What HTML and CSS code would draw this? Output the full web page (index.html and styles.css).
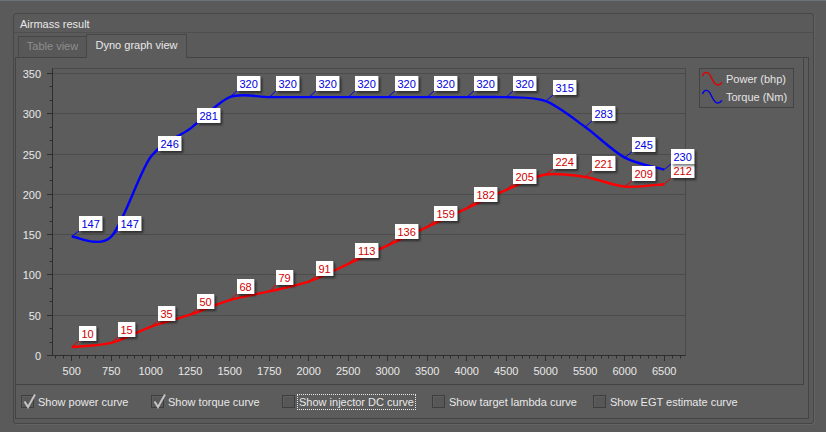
FILE: index.html
```html
<!DOCTYPE html>
<html>
<head>
<meta charset="utf-8">
<title>Airmass result</title>
<link rel="stylesheet" href="styles.css">
</head>
<body>
<div class="window">
  <div class="group">
    <div class="group-title">Airmass result</div>
    <div class="tabs">
      <div class="tab">Table view</div>
      <div class="tab active">Dyno graph view</div>
    </div>
    <div class="pane">
      <div class="chart">
        <svg id="chart" class="chart-svg" width="787" height="326" viewBox="16 58 787 326" xmlns="http://www.w3.org/2000/svg">
          <defs>
            <filter id="sh" x="-20%" y="-20%" width="160%" height="160%">
              <feDropShadow dx="2" dy="2" stdDeviation="0.8" flood-color="#000" flood-opacity="0.5"/>
            </filter>
          </defs>
          <g id="legend">
            <rect x="699.5" y="68.5" width="94" height="39" fill="none" stroke="#434343"/>
            <path d="M702.5,76 C704,71.5 708,70.5 711,77 S717,88 722,82.5" fill="none" stroke="#e00000" stroke-width="1.4"/>
            <text class="legend-text" x="726" y="83">Power (bhp)</text>
            <path d="M702.5,94 C704,89.5 708,88.5 711,95 S717,106 722,100.5" fill="none" stroke="#0000e8" stroke-width="1.4"/>
            <text class="legend-text" x="726" y="101">Torque (Nm)</text>
          </g>
        </svg>
      </div>
      <div class="options">
        <div class="opt"><span class="cb"><svg class="tick" width="16" height="17" viewBox="0 0 16 17"><path d="M2.5,8.5 L6,14 L13,1.5" fill="none" stroke="#c4c4c4" stroke-width="2"/></svg></span><span class="opt-label">Show power curve</span></div>
        <div class="opt"><span class="cb"><svg class="tick" width="16" height="17" viewBox="0 0 16 17"><path d="M2.5,8.5 L6,14 L13,1.5" fill="none" stroke="#c4c4c4" stroke-width="2"/></svg></span><span class="opt-label">Show torque curve</span></div>
        <div class="opt"><span class="cb"></span><span class="opt-label focus">Show injector DC curve</span></div>
        <div class="opt"><span class="cb"></span><span class="opt-label">Show target lambda curve</span></div>
        <div class="opt"><span class="cb"></span><span class="opt-label">Show EGT estimate curve</span></div>
      </div>
    </div>
  </div>
</div>
<script src="chart.js"></script>
</body>
</html>
```
FILE: styles.css
```css
html, body {
  margin: 0;
  padding: 0;
}
body {
  width: 826px;
  height: 432px;
  overflow: hidden;
  box-sizing: border-box;
  background: #5a5a5a;
  border-top: 1px solid #6b727c;
  font-family: "Liberation Sans", Arial, sans-serif;
  font-size: 11px;
  color: #e8e8e8;
}
.window {
  padding: 12px 0 0 13px;
}
.group {
  width: 801px;
  height: 411px;
  box-sizing: border-box;
  border: 1px solid #474747;
  border-radius: 3px;
  box-shadow: 1px 1px 0 #636363;
  display: flex;
  flex-direction: column;
}
.group-title {
  height: 19px;
  box-sizing: border-box;
  padding: 2px 0 0 6px;
  line-height: 16px;
  border-bottom: 1px solid #4f4f4f;
}
.tabs {
  height: 24px;
  display: flex;
  align-items: flex-end;
  padding-left: 4px;
}
.tab {
  box-sizing: border-box;
  width: 68px;
  height: 21px;
  line-height: 19px;
  text-align: center;
  color: #8e8e8e;
  background: #585858;
  border: 1px solid #474747;
  border-right: none;
  border-bottom: none;
}
.tab.active {
  width: 101px;
  height: 24px;
  line-height: 21px;
  color: #e8e8e8;
  background: #5c5c5c;
  border-right: 1px solid #474747;
  margin-bottom: -1px;
  position: relative;
  z-index: 1;
}
.pane {
  flex: 1;
  margin: 0 4px 4px 1px;
  box-sizing: border-box;
  border: 1px solid #444444;
  background: #5c5c5c;
  display: flex;
  flex-direction: column;
}
.chart {
  width: 788px;
  height: 327px;
  box-sizing: border-box;
  border-right: 1px solid #434343;
  border-bottom: 1px solid #434343;
}
.chart-svg {
  display: block;
  font-family: "Liberation Sans", Arial, sans-serif;
  font-size: 11px;
}
.legend-text {
  fill: #e4e4e4;
}
.axis-text {
  fill: #e8e8e8;
}
.options {
  flex: 1;
  display: grid;
  grid-template-columns: 130px 131px 150px 161px auto;
  align-items: center;
  padding-left: 5px;
}
.opt {
  display: flex;
  align-items: center;
}
.cb {
  position: relative;
  width: 13px;
  height: 13px;
  box-sizing: border-box;
  border: 1px solid #3e3e3e;
  background: #575757;
  box-shadow: inset 1px 1px 0 #5f5f5f;
  margin-right: 4px;
  flex: none;
}
.tick {
  position: absolute;
  left: 0;
  top: -3px;
}
.opt-label {
  line-height: 14px;
}
.opt-label.focus {
  margin-left: -2px;
  padding: 0 1px;
  border: 1px dotted #e8e8e8;
}
```
FILE: chart.js
```js
(function () {
  var NS = 'http://www.w3.org/2000/svg';
  var svg = document.getElementById('chart');
  var legend = document.getElementById('legend');
  function el(tag, attrs, parent) {
    var e = document.createElementNS(NS, tag);
    for (var k in attrs) e.setAttribute(k, attrs[k]);
    (parent || svg).insertBefore(e, parent ? null : legend);
    return e;
  }
  var cats = ['500','750','1000','1250','1500','1750','2000','2500','3000','3500','4000','4500','5000','5500','6000','6500'];
  var power = [10,15,35,50,68,79,91,113,136,159,182,205,224,221,209,212];
  var torque = [147,147,246,281,320,320,320,320,320,320,320,320,315,283,245,230];
  var L = 52.5, R = 685.5, T = 68.5, B = 355.5;
  var TENSION = 0.45;
  function X(i) { return 71.75 + 39.5 * i; }
  function Y(v) { return 355.5 - v * 282 / 350; }
  function Yd(v) { return 355 - v * 282 / 350; }

  // plot frame
  el('line', {x1: L, y1: T, x2: R, y2: T, stroke: '#4a4a4a'});
  el('line', {x1: R, y1: T, x2: R, y2: B, stroke: '#4a4a4a'});
  // grid
  for (var v = 50; v <= 350; v += 50) {
    var gy = Math.floor(Y(v)) + 0.5;
    el('line', {x1: L, y1: gy, x2: R, y2: gy, stroke: '#4c4c4c'});
  }
  // y ticks and labels
  for (var k = 0; k <= 21; k++) {
    var tv = k * 50 / 3;
    var ty = Math.floor(Y(tv)) + 0.5;
    if (k % 3 === 0) {
      el('line', {x1: 47, y1: ty, x2: L, y2: ty, stroke: '#2e2e2e'});
      var t = el('text', {x: 41, y: ty + 4, 'text-anchor': 'end', 'class': 'axis-text'});
      t.textContent = String(Math.round(tv));
    } else {
      el('line', {x1: 49.5, y1: ty, x2: L, y2: ty, stroke: '#2e2e2e'});
    }
  }
  // x ticks
  for (var j = 0; ; j++) {
    var tx = 52 + 3.95 + 7.9 * j;
    if (tx > 685) break;
    var px = Math.floor(tx) + 0.5;
    var major = (j % 5 === 2);
    el('line', {x1: px, y1: B, x2: px, y2: major ? 361 : 358.5, stroke: '#2e2e2e'});
  }
  for (var i = 0; i < cats.length; i++) {
    var xt = el('text', {x: X(i), y: 375, 'text-anchor': 'middle', 'class': 'axis-text'});
    xt.textContent = cats[i];
  }
  // axes
  el('line', {x1: L, y1: T, x2: L, y2: B + 0.5, stroke: '#2e2e2e'});
  el('line', {x1: L, y1: B, x2: R, y2: B, stroke: '#2e2e2e'});

  function spline(pts) {
    var f = TENSION / 3;
    var d = 'M' + pts[0][0].toFixed(2) + ',' + pts[0][1].toFixed(2);
    for (var i = 0; i < pts.length - 1; i++) {
      var p0 = pts[i - 1] || pts[i], p1 = pts[i], p2 = pts[i + 1], p3 = pts[i + 2] || pts[i + 1];
      var c1x = p1[0] + (p2[0] - p0[0]) * f, c1y = p1[1] + (p2[1] - p0[1]) * f;
      var c2x = p2[0] - (p3[0] - p1[0]) * f, c2y = p2[1] - (p3[1] - p1[1]) * f;
      d += ' C' + c1x.toFixed(2) + ',' + c1y.toFixed(2) + ' ' + c2x.toFixed(2) + ',' + c2y.toFixed(2) + ' ' + p2[0].toFixed(2) + ',' + p2[1].toFixed(2);
    }
    return d;
  }
  function series(data, lineColor) {
    var pts = data.map(function (v, i) { return [X(i), Yd(v)]; });
    el('path', {d: spline(pts), fill: 'none', stroke: lineColor, 'stroke-width': 2.4, 'stroke-linejoin': 'round'});
    return pts;
  }
  function labels(data, pts, lineColor, textColor) {
    data.forEach(function (v, i) {
      var p = pts[i];
      var s = String(v);
      var w = s.length * 6.1 + 5;
      var bx = Math.round(p[0]) + 7, by = Math.round(p[1]) - 21;
      el('line', {x1: p[0], y1: p[1], x2: bx + 1, y2: by + 14, stroke: lineColor, 'stroke-width': 1});
      el('rect', {x: bx, y: by, width: w, height: 15, fill: '#ffffff', filter: 'url(#sh)'});
      var t = el('text', {x: bx + w / 2, y: by + 12, 'text-anchor': 'middle', fill: textColor});
      t.textContent = s;
    });
  }
  var pp = series(power, '#ff0000');
  var tp = series(torque, '#0000ff');
  labels(power, pp, '#e00000', '#d00000');
  labels(torque, tp, '#0000ee', '#0000e0');
})();
```
